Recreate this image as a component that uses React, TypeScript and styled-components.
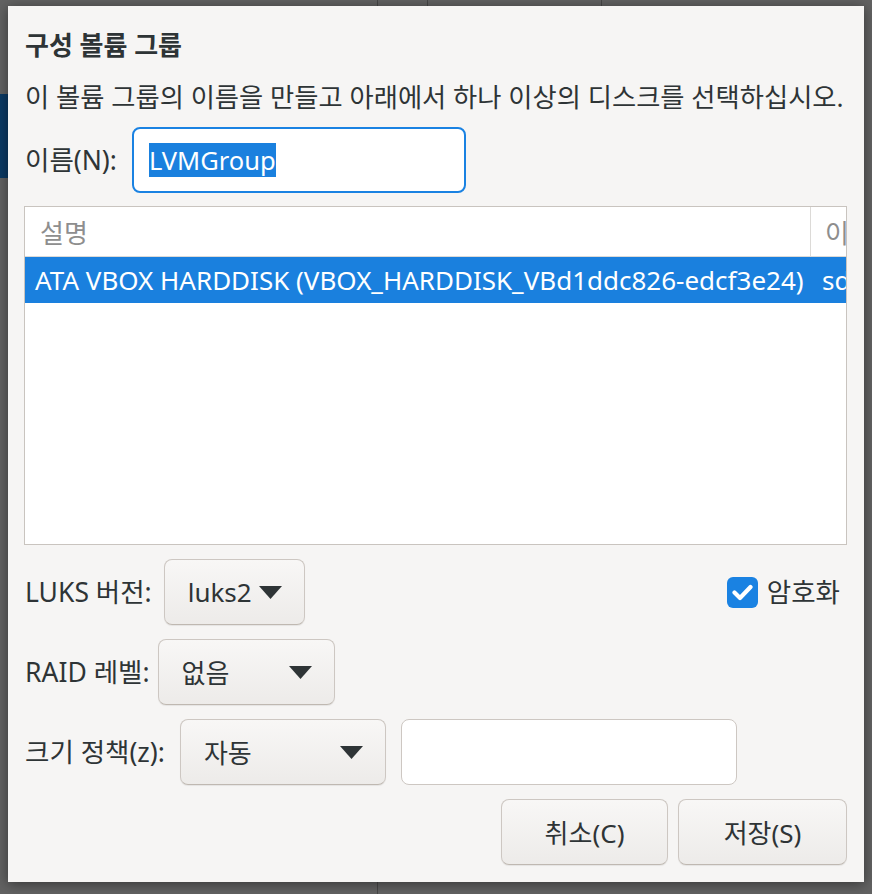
import React from "react";
import styled, { createGlobalStyle } from "styled-components";

const GlobalStyle = createGlobalStyle`
  html, body { margin: 0; padding: 0; }
  body {
    background: #606060;
    font-family: "Noto Sans", "Noto Sans CJK KR", sans-serif;
    color: #2e3436;
  }
  * { box-sizing: border-box; }
`;

const Desktop = styled.div`
  width: 872px;
  height: 894px;
  padding: 6px 8px 12px 8px;
  background:
    linear-gradient(#0c3a64, #0c3a64) 0 94px / 8px 84px no-repeat,
    linear-gradient(#474747, #474747) 377px 0 / 1px 100% no-repeat,
    linear-gradient(#474747, #474747) 427px 0 / 1px 6px no-repeat,
    linear-gradient(#474747, #474747) 601px 0 / 1px 6px no-repeat,
    #626262;
`;

const Dialog = styled.div`
  width: 856px;
  height: 876px;
  background: #f6f5f4;
  box-shadow: 0 2px 12px rgba(0, 0, 0, 0.45);
  padding: 0 17px 17px 16px;
  display: flex;
  flex-direction: column;
`;

const Title = styled.div`
  margin-top: 22px;
  height: 34px;
  line-height: 34px;
  font-size: 26px;
  font-weight: 700;
  padding-left: 1px;
`;

const Description = styled.div`
  margin-top: 18px;
  height: 34px;
  line-height: 34px;
  font-size: 26.3px;
  white-space: nowrap;
  padding-left: 1px;
`;

const Row = styled.div<{ $gap?: number; $mt?: number }>`
  margin-top: ${(p) => p.$mt ?? 14}px;
  height: 66px;
  display: flex;
  align-items: center;
  gap: ${(p) => p.$gap ?? 13}px;
`;

const Label = styled.span`
  font-size: 26.5px;
  line-height: 34px;
  white-space: nowrap;
  padding-left: 1px;
`;

const NameEntry = styled.div`
  width: 334px;
  height: 66px;
  border: 2px solid #1a82e2;
  border-radius: 8px;
  background: #ffffff;
  padding-left: 15px;
  display: flex;
  align-items: center;
`;

const Selected = styled.span`
  background: #1a80de;
  color: #ffffff;
  font-size: 25.5px;
  line-height: 34px;
`;

const Table = styled.div`
  margin-top: 13px;
  height: 339px;
  border: 1px solid #c9c4bf;
  background: #ffffff;
  overflow: hidden;
`;

const Grid = styled.div`
  display: grid;
  grid-template-columns: 786px 240px;
`;

const HeadCell = styled.div<{ $divider?: boolean; $pl: number }>`
  height: 50px;
  border-bottom: 1px solid #dcdad7;
  border-right: ${(p) => (p.$divider ? "1px solid #dcdad7" : "none")};
  padding-left: ${(p) => p.$pl}px;
  display: flex;
  align-items: center;
  color: #8e8e8e;
  font-size: 26px;
  white-space: nowrap;
`;

const Cell = styled.div<{ $pl: number }>`
  height: 46px;
  background: #1a80de;
  color: #ffffff;
  padding-left: ${(p) => p.$pl}px;
  display: flex;
  align-items: center;
  font-size: 26px;
  white-space: nowrap;
`;

const Combo = styled.div<{ $w: number }>`
  width: ${(p) => p.$w}px;
  height: 66px;
  border: 1px solid #cdc7c2;
  border-bottom-color: #bfb8b1;
  border-radius: 8px;
  background: linear-gradient(#f8f7f6, #edebe9);
  box-shadow: 0 1px 1px rgba(0, 0, 0, 0.07);
  padding: 0 22px 0 23px;
  display: flex;
  align-items: center;
  justify-content: space-between;
  font-size: 26px;
  white-space: nowrap;
`;

const Arrow = () => (
  <svg width="23" height="13" viewBox="0 0 23 13">
    <polygon points="0,0 23,0 11.5,13" fill="#2e3436" />
  </svg>
);

const CheckGroup = styled.div`
  margin-left: auto;
  margin-right: 7px;
  display: flex;
  align-items: center;
  gap: 8px;
`;

const CheckBox = styled.div`
  width: 31px;
  height: 31px;
  border-radius: 6px;
  background: #1a82e2;
  display: flex;
  align-items: center;
  justify-content: center;
`;

const Entry = styled.div`
  width: 336px;
  height: 66px;
  border: 1px solid #cdc7c2;
  border-radius: 8px;
  background: #ffffff;
`;

const ButtonRow = styled.div`
  margin-top: 14px;
  height: 66px;
  display: flex;
  justify-content: flex-end;
  gap: 10px;
`;

const Button = styled.div<{ $w: number }>`
  width: ${(p) => p.$w}px;
  height: 66px;
  border: 1px solid #cdc7c2;
  border-bottom-color: #bfb8b1;
  border-radius: 8px;
  background: linear-gradient(#f8f7f6, #edebe9);
  box-shadow: 0 1px 1px rgba(0, 0, 0, 0.07);
  display: flex;
  align-items: center;
  justify-content: center;
  font-size: 26px;
`;

export default function App() {
  return (
    <>
      <GlobalStyle />
      <Desktop>
        <Dialog>
          <Title>구성 볼륨 그룹</Title>
          <Description>
            이 볼륨 그룹의 이름을 만들고 아래에서 하나 이상의 디스크를 선택하십시오.
          </Description>
          <Row $mt={13} $gap={15}>
            <Label>이름(N):</Label>
            <NameEntry>
              <Selected>LVMGroup</Selected>
            </NameEntry>
          </Row>
          <Table>
            <Grid>
              <HeadCell $divider $pl={15}>설명</HeadCell>
              <HeadCell $pl={14}>이름</HeadCell>
              <Cell $pl={10}>ATA VBOX HARDDISK (VBOX_HARDDISK_VBd1ddc826-edcf3e24)</Cell>
              <Cell $pl={11}>sda</Cell>
            </Grid>
          </Table>
          <Row $gap={12}>
            <Label>LUKS 버전:</Label>
            <Combo $w={141}>
              <span>luks2</span>
              <Arrow />
            </Combo>
            <CheckGroup>
              <CheckBox>
                <svg width="21" height="17" viewBox="0 0 21 17">
                  <path
                    d="M2.5 8.5 L8 14 L18.5 3"
                    fill="none"
                    stroke="#ffffff"
                    strokeWidth="4.2"
                    strokeLinecap="round"
                    strokeLinejoin="round"
                  />
                </svg>
              </CheckBox>
              <Label>암호화</Label>
            </CheckGroup>
          </Row>
          <Row $gap={8}>
            <Label>RAID 레벨:</Label>
            <Combo $w={177}>
              <span>없음</span>
              <Arrow />
            </Combo>
          </Row>
          <Row $gap={15}>
            <Label>크기 정책(z):</Label>
            <Combo $w={206}>
              <span>자동</span>
              <Arrow />
            </Combo>
            <Entry />
          </Row>
          <ButtonRow>
            <Button $w={167}>취소(C)</Button>
            <Button $w={169}>저장(S)</Button>
          </ButtonRow>
        </Dialog>
      </Desktop>
    </>
  );
}
